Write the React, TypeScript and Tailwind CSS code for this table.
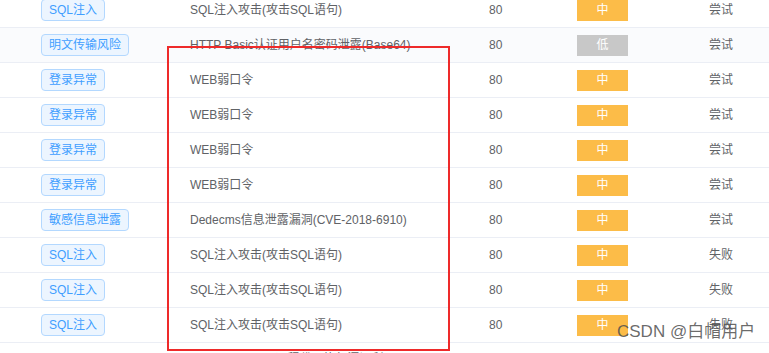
import React from "react";

type Row = { tag?: string; desc: string; level?: "中" | "低"; status?: string; tint?: boolean };

const rows: Row[] = [
  { tag: "SQL注入", desc: "SQL注入攻击(攻击SQL语句)", level: "中", status: "尝试" },
  { tag: "明文传输风险", desc: "HTTP Basic认证用户名密码泄露(Base64)", level: "低", status: "尝试", tint: true },
  { tag: "登录异常", desc: "WEB弱口令", level: "中", status: "尝试" },
  { tag: "登录异常", desc: "WEB弱口令", level: "中", status: "尝试" },
  { tag: "登录异常", desc: "WEB弱口令", level: "中", status: "尝试" },
  { tag: "登录异常", desc: "WEB弱口令", level: "中", status: "尝试" },
  { tag: "敏感信息泄露", desc: "Dedecms信息泄露漏洞(CVE-2018-6910)", level: "中", status: "尝试" },
  { tag: "SQL注入", desc: "SQL注入攻击(攻击SQL语句)", level: "中", status: "失败" },
  { tag: "SQL注入", desc: "SQL注入攻击(攻击SQL语句)", level: "中", status: "失败" },
  { tag: "SQL注入", desc: "SQL注入攻击(攻击SQL语句)", level: "中", status: "失败" },
];

export default function App() {
  return (
    <div
      className="relative w-[769px] h-[353px] overflow-hidden bg-white text-[12px] text-[#606266]"
      style={{ fontFamily: '"Liberation Sans", "Noto Sans CJK SC", sans-serif' }}
    >
      <div className="-mt-[7px] flex flex-col">
        {rows.map((r, i) => (
          <div
            key={i}
            className={`grid grid-cols-[190px_299px_88px_132px_1fr] items-center h-[35px] border-b border-[#ebeef5] ${
              r.tint ? "bg-[#fafbfd]" : "bg-white"
            }`}
          >
            <div className="pl-[41px] flex">
              <span className="h-[22px] px-[7px] flex items-center rounded-[4px] border border-[#b3d8ff] bg-[#ecf5ff] text-[#409eff] leading-none">
                {r.tag}
              </span>
            </div>
            <div className="whitespace-nowrap">{r.desc}</div>
            <div>80</div>
            <div className="flex">
              <span
                className={`w-[51px] h-[21px] flex items-center justify-center text-white leading-none ${
                  r.level === "低" ? "bg-[#c8c8c8]" : "bg-[#fcbc48]"
                }`}
              >
                {r.level}
              </span>
            </div>
            <div>{r.status}</div>
          </div>
        ))}
        <div className="grid grid-cols-[190px_1fr] pt-[7px] h-[35px]">
          <div />
          <div className="whitespace-nowrap">Apache Struts2 远程代码执行漏洞利用(CVE-2018-75</div>
        </div>
      </div>
      <div className="absolute left-[167px] top-[46px] w-[283px] h-[305px] border-2 border-[#ee2a2a] pointer-events-none" />
      <div className="absolute left-[617px] top-[323px] text-[17px] text-[#505050]/85 whitespace-nowrap leading-none">
        CSDN @白帽用户
      </div>
    </div>
  );
}
